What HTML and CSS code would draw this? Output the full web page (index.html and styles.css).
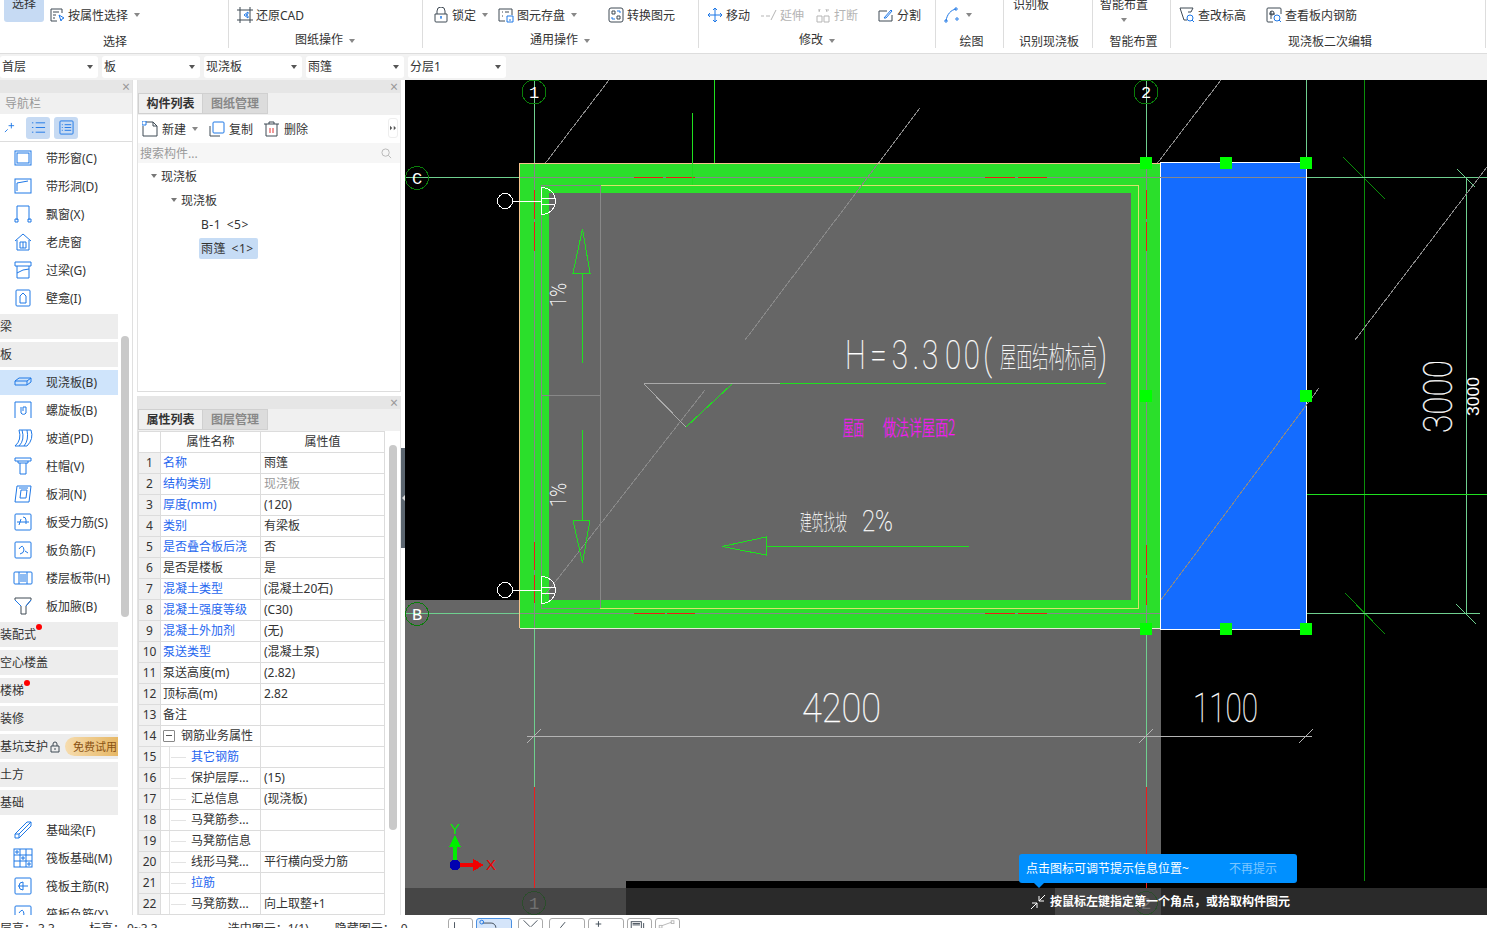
FILE: index.html
```html
<!DOCTYPE html>
<html lang="zh">
<head>
<meta charset="utf-8">
<title>现浇板</title>
<link rel="stylesheet" href="styles.css">
</head>
<body>
<div class="app">
  <header class="ribbon">
    <section class="group g1">
      <div class="tools">
        <div class="bigbtn">选择</div>
        <div class="tool"><svg class="ri" viewBox="0 0 16 16"><path class="dk" d="M13 6V2H2v12h6M4 5h6M4 8h3M4 11h2"/><path class="bl" d="M10 8l5 3-2 1-1 2z"/></svg>按属性选择<i class="caret"></i></div>
      </div>
      <div class="label low">选择</div>
    </section>
    <section class="group g2">
      <div class="tools">
        <div class="tool"><svg class="ri" viewBox="0 0 16 16"><path class="dk" d="M0 3h16M0 13h16M3 0v16M13 0v16"/><path class="bl" d="M11 5L7 8l4 3V9L9 8l2-1z"/></svg>还原CAD</div>
      </div>
      <div class="label">图纸操作<i class="caret"></i></div>
    </section>
    <section class="group g3">
      <div class="tools">
        <div class="tool t-lock"><svg class="ri" viewBox="0 0 16 16"><path class="dk" d="M4 7V4a4 4 0 0 1 8 0v3M2 7h12v7a1 1 0 0 1-1 1H3a1 1 0 0 1-1-1z"/><path class="bl" d="M8 9v3M7 10h2"/></svg>锁定<i class="caret"></i></div>
        <div class="tool t-save"><svg class="ri" viewBox="0 0 16 16"><path class="dk" d="M1 2h13v6M1 2v12h6M4 5h1M7 5h4M4 9h1"/><path class="bl" d="M9 9h6v6H9zM11 13h2"/></svg>图元存盘<i class="caret"></i></div>
        <div class="tool t-conv"><svg class="ri" viewBox="0 0 16 16"><rect class="dk" x="1" y="1" width="14" height="14" rx="2"/><path class="dk" d="M4 4h3v3H4zM9 9h3v3H9z"/><path class="bl" d="M9 4h3v2M7 12H4v-2"/></svg>转换图元</div>
      </div>
      <div class="label">通用操作<i class="caret"></i></div>
    </section>
    <section class="group g4">
      <div class="tools">
        <div class="tool t-move"><svg class="ri" viewBox="0 0 16 16"><path class="bl" d="M8 1v14M1 8h14M6 3l2-2 2 2M6 13l2 2 2-2M3 6L1 8l2 2M13 6l2 2-2 2"/></svg>移动</div>
        <div class="tool off t-ext"><svg class="ri" viewBox="0 0 16 16"><path class="gy" d="M0 9h3M5 9h4M10 13l5-10"/></svg>延伸</div>
        <div class="tool off t-brk"><svg class="ri" viewBox="0 0 16 16"><path class="gy" d="M2 9h5v6H2zM9 9h5v6H9zM4 5l1-3M12 5l-1-3M3 3h1M12 3h2"/></svg>打断</div>
        <div class="tool t-split"><svg class="ri" viewBox="0 0 16 16"><path class="dk" d="M14 8v6H1V4h8"/><path class="bl" d="M6 11l7-8 1 1-6 7z"/></svg>分割</div>
      </div>
      <div class="label">修改<i class="caret"></i></div>
    </section>
    <section class="group g5">
      <div class="tools">
        <div class="tool"><svg class="ri" viewBox="0 0 16 16"><path class="bl" d="M2 14C3 7 7 3 12 2"/><circle class="bl" cx="2" cy="14" r="1.2"/><circle class="bl" cx="12" cy="2" r="1.2"/><circle class="bl" cx="13" cy="12" r="1.2"/></svg><i class="caret c0"></i></div>
      </div>
      <div class="label low">绘图</div>
    </section>
    <section class="group g6">
      <div class="tools"><div class="cliptxt">识别板</div></div>
      <div class="label low">识别现浇板</div>
    </section>
    <section class="group g7">
      <div class="tools"><div class="cliptxt col">智能布置<i class="caret c0"></i></div></div>
      <div class="label low">智能布置</div>
    </section>
    <section class="group g8">
      <div class="tools">
        <div class="tool t-chk"><svg class="ri" viewBox="0 0 16 16"><path class="dk" d="M1 1h13l-2 4H9M1 1l4 12h3"/><circle class="bl" cx="11" cy="11" r="3"/><path class="bl" d="M13 13l2 2"/></svg>查改标高</div>
        <div class="tool t-view"><svg class="ri" viewBox="0 0 16 16"><path class="dk" d="M15 7V2a1 1 0 0 0-1-1H2a1 1 0 0 0-1 1v12a1 1 0 0 0 1 1h5M5 4v8M3 7h6"/><circle class="dk" cx="6" cy="6" r="2"/><circle class="bl" cx="11" cy="11" r="3"/><path class="bl" d="M13 13l2 2"/></svg>查看板内钢筋</div>
      </div>
      <div class="label low">现浇板二次编辑</div>
    </section>
  </header>

  <div class="filters">
    <div class="combo">首层</div>
    <div class="combo">板</div>
    <div class="combo">现浇板</div>
    <div class="combo">雨篷</div>
    <div class="combo">分层1</div>
  </div>

  <main class="main">
    <aside class="nav">
      <div class="phead"><span class="close">×</span></div>
      <div class="nav-title">导航栏</div>
      <div class="nav-tools">
        <svg class="pin" viewBox="0 0 12 12"><path class="bl" d="M8 1v6M5 4h6M1 11l3-3"/></svg>
        <span class="nt-btn"><svg viewBox="0 0 16 16"><path class="bl" d="M5 3h10M5 8h10M5 13h10M1 3h1.500M1 8h1.500M1 13h1.500"/></svg></span>
        <span class="nt-btn"><svg viewBox="0 0 16 16"><rect class="bl" x="1" y="1" width="14" height="14" rx="1"/><path class="bl" d="M3 5h1M6 5h7M3 8h1M6 8h7M3 11h1M6 11h7"/></svg></span>
      </div>
      <div class="nav-list">
        <div class="ni"><svg class="nic" viewBox="0 0 18 18"><rect class="bl" x="1" y="2" width="16" height="14"/><rect class="bl" x="3" y="4" width="12" height="10"/></svg>带形窗(C)</div>
        <div class="ni"><svg class="nic" viewBox="0 0 18 18"><rect class="bl" x="1" y="2" width="16" height="14"/><path class="bl" d="M3 14V6l11-2"/></svg>带形洞(D)</div>
        <div class="ni"><svg class="nic" viewBox="0 0 18 18"><path class="bl" d="M3 15V1h12v14M1 14h3v3H1zM14 14h3v3h-3z"/></svg>飘窗(X)</div>
        <div class="ni"><svg class="nic" viewBox="0 0 18 18"><path class="bl" d="M1 8l8-7 8 7M3 7v10h12V7M6 9h6v6H6zM9 9v6"/></svg>老虎窗</div>
        <div class="ni"><svg class="nic" viewBox="0 0 18 18"><path class="bl" d="M1 1h16v4H1zM3 5v12h12V5M3 12q6-4 12-4"/></svg>过梁(G)</div>
        <div class="ni"><svg class="nic" viewBox="0 0 18 18"><rect class="bl" x="2" y="1" width="14" height="16" rx="1"/><path class="bl" d="M6 14V7l3-3 3 3v7z"/></svg>壁龛(I)</div>
        <div class="ni sec">梁</div>
        <div class="ni sec">板</div>
        <div class="ni cur"><svg class="nic" viewBox="0 0 18 18"><path class="bl" d="M1 8h12l4-3H5zM1 8v4h12l4-3V5M13 8v4"/></svg>现浇板(B)</div>
        <div class="ni"><svg class="nic" viewBox="0 0 18 18"><path class="bl" d="M1 17V1h16v16M7 6v6a3 3 0 0 0 5 0V6H9v4"/></svg>螺旋板(B)</div>
        <div class="ni"><svg class="nic" viewBox="0 0 18 18"><path class="bl" d="M1 17q7-6 4-16h12q3 9-4 16zM5 17q6-6 3-16M10 17q5-6 3-16"/></svg>坡道(PD)</div>
        <div class="ni"><svg class="nic" viewBox="0 0 18 18"><path class="bl" d="M1 1h16v3H1zM4 4v2h10V4M6 6v11h6V6"/></svg>柱帽(V)</div>
        <div class="ni"><svg class="nic" viewBox="0 0 18 18"><path class="bl" d="M3 1h14l-2 16H1zM7 5h6l-1 8H6zM5 3h9"/></svg>板洞(N)</div>
        <div class="ni"><svg class="nic" viewBox="0 0 18 18"><rect class="bl" x="1" y="1" width="16" height="16" rx="1"/><path class="bl" d="M3 9h12M9 4a3 3 0 0 1 3 3v4M7 6l-2 6"/></svg>板受力筋(S)</div>
        <div class="ni"><svg class="nic" viewBox="0 0 18 18"><rect class="bl" x="1" y="1" width="16" height="16" rx="1"/><path class="bl" d="M5 8q4-6 5 1 0 3-4 4M11 10l3 2"/></svg>板负筋(F)</div>
        <div class="ni"><svg class="nic" viewBox="0 0 18 18"><rect class="bl" x="0" y="3" width="18" height="12" rx="1"/><path class="bl" d="M5 3v12M13 3v12M7 5v8M9 5v8M11 5v8"/></svg>楼层板带(H)</div>
        <div class="ni"><svg class="nic" viewBox="0 0 18 18"><path class="dk" d="M1 1h16v2L12 9v8H7V9L1 3z"/><path class="bl" d="M1 3l6 6M17 3l-5 6"/></svg>板加腋(B)</div>
        <div class="ni sec">装配式<b class="dot d1"></b></div>
        <div class="ni sec">空心楼盖</div>
        <div class="ni sec">楼梯<b class="dot d2"></b></div>
        <div class="ni sec">装修</div>
        <div class="ni sec">基坑支护<svg class="lk" viewBox="0 0 10 12"><path class="dk" d="M3 5V3a2 2 0 0 1 4 0v2M1 5h8v6H1zM5 7v2"/></svg><span class="pill">免费试用</span></div>
        <div class="ni sec">土方</div>
        <div class="ni sec">基础</div>
        <div class="ni"><svg class="nic" viewBox="0 0 18 18"><path class="bl" d="M1 13L13 1h4v4L5 17H1zM1 13h4v4M5 13L17 1M3 11l0 0"/></svg>基础梁(F)</div>
        <div class="ni"><svg class="nic" viewBox="0 0 18 18"><rect class="bl" x="0" y="0" width="18" height="18"/><path class="bl" d="M6 0v18M12 0v18M0 6h18M0 12h18M2 2h2v2H2zM8 8h2v2H8zM14 14h2v2h-2z"/></svg>筏板基础(M)</div>
        <div class="ni"><svg class="nic" viewBox="0 0 18 18"><rect class="bl" x="1" y="1" width="16" height="16" rx="1"/><path class="bl" d="M4 9h10M9 5a4 4 0 1 0 0 8M9 5v8"/></svg>筏板主筋(R)</div>
        <div class="ni"><svg class="nic" viewBox="0 0 18 18"><rect class="bl" x="1" y="1" width="16" height="16" rx="1"/><path class="bl" d="M5 8q4-6 5 1 0 3-4 4"/></svg>筏板负筋(X)</div>
      </div>
      <div class="thumb nav-thumb"></div>
    </aside>

    <div class="panels">
      <section class="panel comp">
        <div class="phead"><span class="close">×</span></div>
        <div class="tabs"><span class="tab on">构件列表</span><span class="tab">图纸管理</span></div>
        <div class="ptools">
          <span class="pt"><svg class="ri" viewBox="0 0 16 16"><path class="dk" d="M4 1h7l4 4v10H1V5"/><path class="dk" d="M11 1v4h4"/><path class="bl" d="M0 0h4v4H0z"/></svg>新建<i class="caret"></i></span>
          <span class="pt"><svg class="ri" viewBox="0 0 16 16"><path class="dk" d="M1 5v10h10"/><rect class="bl" x="4" y="1" width="11" height="11" rx="1"/></svg>复制</span>
          <span class="pt"><svg class="ri" viewBox="0 0 16 16"><path class="dk" d="M0 3h15M5 3V1h5v2M2 3v12h11V3"/><path class="rd" d="M6 7v5M9 7v5"/></svg>删除</span>
          <span class="more"><svg viewBox="0 0 10 8"><path class="tri" d="M1 1l3 3-3 3zM6 1l3 3-3 3z"/></svg></span>
        </div>
        <div class="search"><span>搜索构件...</span><svg viewBox="0 0 12 12"><circle class="gy" cx="5" cy="5" r="4"/><path class="gy" d="M8 8l3 3"/></svg></div>
        <div class="tree">
          <div class="tr l0"><i class="tw"></i>现浇板</div>
          <div class="tr l1"><i class="tw"></i>现浇板</div>
          <div class="tr l2">B-1 &lt;5&gt;</div>
          <div class="tr l2 sel"><span>雨篷 &lt;1&gt;</span></div>
        </div>
      </section>

      <section class="panel props">
        <div class="phead"><span class="close">×</span></div>
        <div class="tabs"><span class="tab on">属性列表</span><span class="tab">图层管理</span></div>
        <table class="ptable">
          <thead><tr><th class="idx0"></th><th class="cn">属性名称</th><th class="cv">属性值</th></tr></thead>
          <tbody>
            <tr><th>1</th><td class="lnk">名称</td><td>雨篷</td></tr>
            <tr><th>2</th><td class="lnk">结构类别</td><td class="mut">现浇板</td></tr>
            <tr><th>3</th><td class="lnk">厚度(mm)</td><td>(120)</td></tr>
            <tr><th>4</th><td class="lnk">类别</td><td>有梁板</td></tr>
            <tr><th>5</th><td class="lnk">是否叠合板后浇</td><td>否</td></tr>
            <tr><th>6</th><td>是否是楼板</td><td>是</td></tr>
            <tr><th>7</th><td class="lnk">混凝土类型</td><td>(混凝土20石)</td></tr>
            <tr><th>8</th><td class="lnk">混凝土强度等级</td><td>(C30)</td></tr>
            <tr><th>9</th><td class="lnk">混凝土外加剂</td><td>(无)</td></tr>
            <tr><th>10</th><td class="lnk">泵送类型</td><td>(混凝土泵)</td></tr>
            <tr><th>11</th><td>泵送高度(m)</td><td>(2.82)</td></tr>
            <tr><th>12</th><td>顶标高(m)</td><td>2.82</td></tr>
            <tr><th>13</th><td>备注</td><td></td></tr>
            <tr><th>14</th><td class="grp"><i class="minus"></i>钢筋业务属性</td><td></td></tr>
            <tr><th>15</th><td class="sub lnk">其它钢筋</td><td></td></tr>
            <tr><th>16</th><td class="sub">保护层厚...</td><td>(15)</td></tr>
            <tr><th>17</th><td class="sub">汇总信息</td><td>(现浇板)</td></tr>
            <tr><th>18</th><td class="sub">马凳筋参...</td><td></td></tr>
            <tr><th>19</th><td class="sub">马凳筋信息</td><td></td></tr>
            <tr><th>20</th><td class="sub">线形马凳...</td><td>平行横向受力筋</td></tr>
            <tr><th>21</th><td class="sub lnk">拉筋</td><td></td></tr>
            <tr><th>22</th><td class="sub">马凳筋数...</td><td>向上取整+1</td></tr>
          </tbody>
        </table>
        <div class="thumb tb-thumb"></div>
      </section>
      <div class="handle"><i></i></div>
    </div>

    <div class="canvas">
      <svg class="cad" viewBox="405 80 1082 835" width="1082" height="835">
        <rect class="f-gray" x="405" y="600" width="756" height="281"/>
        <rect class="f-gray" x="405" y="881" width="221" height="34"/>
        <rect class="f-gray" x="1055" y="888" width="106" height="27"/>

        <path class="l-dgreen" d="M1364 80V881M1343 157L1385 199M1345 593L1385 634"/>
        <path class="l-axis" d="M534.500 80V164M1146.500 80V164M405 177.500H520M1306 177.500H1487M405 613.500H520M1306 613.500H1480M1306.500 80V164M1466.500 178V614M1457 169L1475 187M1456 604L1476 624M534.500 628V787M1146.500 628V787"/>
        <path class="l-bright" d="M714.500 80V164M1125 494.500H1487M1125 472.500H1197"/>
        <path class="l-gray" d="M609 80L534 178M1221 80L1146 178M1487 167L1355 340"/>
        <path class="l-red" d="M534.500 787V888M1146.500 787V888"/>

        <rect class="f-green" x="519.500" y="163" width="641.500" height="465.500"/>
        <rect class="f-blue" x="1160.500" y="162.500" width="145.500" height="466.500"/>
        <rect class="f-gray" x="549" y="193" width="582" height="407"/>
        <path class="l-yellow" d="M600 185.500H1138.500V608.500H600"/>
        <path class="l-gray" d="M600 185.500H541.500V608.500H600M600.500 185V608M541 395.500H600M520 177.500H1306M520 613.500H1160M534.500 164V628M1146.500 164V628"/>
        <path class="l-gray" d="M920 108L745 340M705 390L545 595M1319 388L1161 600"/>
        <path class="l-orange" d="M519.500 628V163.500H1160"/>
        <path class="l-white" d="M520 628.500H1160"/>
        <path class="l-red" d="M534.500 190V219M534.500 222V251M534.500 542V570M534.500 575V603M1146.500 190V219M1146.500 222V251M1146.500 545V575M1146.500 578V605M634 177.500H663M666 177.500H695M985 177.500H1015M1018 177.500H1047M634 613.500H665M667 613.500H695M985 613.500H1015M1018 613.500H1047"/>
        <path class="l-bright" d="M692.500 113V185"/>

        <circle class="ring" cx="534" cy="92" r="12"/>
        <circle class="ring" cx="1146" cy="92" r="12"/>
        <circle class="ring" cx="417" cy="178" r="11.500"/>
        <circle class="ring" cx="417" cy="614" r="11.500"/>
        <text class="ax" x="534" y="98">1</text>
        <text class="ax" x="1146" y="98">2</text>
        <text class="ax" x="417" y="184">C</text>
        <text class="ax" x="417" y="620">B</text>

        <g class="door">
          <circle cx="505" cy="201" r="7.500"/><path d="M513 201.500H541M541.500 187.500A14 13.500 0 0 1 541.500 214.500ZM541.500 198.500H555M541.500 204.500H555"/>
          <circle cx="505" cy="590" r="7.500"/><path d="M513 590.500H541M541.500 576.500A14 13.500 0 0 1 541.500 603.500ZM541.500 587.500H555M541.500 593.500H555"/>
        </g>
        <path class="l-bright" d="M582.500 229L590 273H573ZM582.500 273V363M582.500 430V520M573 520H590L582.500 563ZM766 546.500H969M766 537V555L722 546.500ZM732 384L686 427M780 383.500H1106"/>
        <path class="l-gray2" d="M644 383.500H780M644 384L686 427"/>

        <text class="thin" transform="translate(845 369) scale(.72 1)" x="0 35 65 94 107 139 165 192">H=3.300(</text>
        <text class="thincjk" x="1000" y="368" textLength="97" lengthAdjust="spacingAndGlyphs">屋面结构标高</text>
        <text class="thin" transform="translate(1098 369) scale(.72 1)" x="0">)</text>
        <text class="mag" x="843" y="435" textLength="21" lengthAdjust="spacingAndGlyphs">屋面</text>
        <text class="mag" x="883" y="435" textLength="72" lengthAdjust="spacingAndGlyphs">做法详屋面2</text>
        <text class="thincjk t2" x="800" y="530" textLength="47" lengthAdjust="spacingAndGlyphs">建筑找坡</text>
        <text class="thin t3" x="862" y="531" textLength="31" lengthAdjust="spacingAndGlyphs">2%</text>
        <text class="thin t4" x="802" y="722" textLength="79" lengthAdjust="spacingAndGlyphs">4200</text>
        <text class="thin t4" x="1193" y="722" textLength="65" lengthAdjust="spacingAndGlyphs">1100</text>
        <text class="thin t4" transform="rotate(-90 1452 433)" x="1452" y="433" textLength="73" lengthAdjust="spacingAndGlyphs">3000</text>
        <text class="small" transform="rotate(-90 1479 416)" x="1479" y="416" textLength="39" lengthAdjust="spacingAndGlyphs">3000</text>
        <text class="thin t5" transform="rotate(-90 566 307)" x="566" y="307" textLength="24" lengthAdjust="spacingAndGlyphs">1%</text>
        <text class="thin t5" transform="rotate(-90 566 507)" x="566" y="507" textLength="24" lengthAdjust="spacingAndGlyphs">1%</text>

        <path class="l-dim" d="M527 736.500H1312M527 743L541 729M1139 743L1153 729M1299 743L1313 729"/>

        <g class="grips">
          <rect x="1140" y="157" width="12" height="12"/><rect x="1220" y="157" width="12" height="12"/><rect x="1300" y="157" width="12" height="12"/>
          <rect x="1140" y="390" width="12" height="12"/><rect x="1300" y="390" width="12" height="12"/>
          <rect x="1140" y="623" width="12" height="12"/><rect x="1220" y="623" width="12" height="12"/><rect x="1300" y="623" width="12" height="12"/>
        </g>

        <path class="arrow-g" d="M453 860V847H449L455 835L461 847H457V860Z"/>
        <path class="arrow-r" d="M458 863H473V859L484 865L473 871V867H458Z"/>
        <circle class="axis-o" cx="455" cy="865" r="5.500"/>
        <text class="ay" x="455" y="834">Y</text>
        <text class="ax-x" x="486" y="870">X</text>

        <circle class="ring" cx="534" cy="903" r="11.500"/>
        <circle class="ring" cx="1146" cy="903" r="11.500"/>
        <text class="ax" x="534" y="909">1</text>
        <text class="ax" x="1146" y="909">2</text>
      </svg>
      <div class="promptbar">
        <svg viewBox="0 0 16 16"><path class="wh" d="M1 15L7 9M2 9h5v5M15 1L9 7M9 2v5h5"/></svg>
        <span>按鼠标左键指定第一个角点，或拾取构件图元</span>
      </div>
      <div class="tip"><span>点击图标可调节提示信息位置~</span><span class="tip-off">不再提示</span></div>
    </div>
  </main>

  <footer class="status">
    <div class="st-text"><span class="s1">层高：</span><span class="s2">3.3</span><span class="s3">标高：</span><span class="s4">0~3.3</span><span class="s5">选中图元：</span><span class="s6">1(1)</span><span class="s7">隐藏图元：</span><span>0</span></div>
    <span class="sb w25"><svg viewBox="0 0 25 10"><path class="dk" d="M6 3V10"/></svg></span>
    <span class="sb w36 on"><svg viewBox="0 0 36 10"><path class="dk" d="M6 4H15a5 5 0 0 1 5 5"/><circle class="bl" cx="5" cy="3" r="2"/></svg></span>
    <span class="sb w25 m6"><svg viewBox="0 0 25 10"><path class="dk" d="M5 1L12 8M20 1L13 8"/></svg></span>
    <span class="sb w36 m6"><svg viewBox="0 0 36 10"><path class="dk" d="M11 9L16 3"/></svg></span>
    <span class="sb w36"><svg viewBox="0 0 36 10"><path class="dk" d="M7 5H13M10 2V8"/></svg></span>
    <span class="sb w25"><svg viewBox="0 0 25 10"><rect class="dk" x="3.500" y="2.500" width="11" height="8"/><path class="dk" d="M5 4.500H13M5 6H13M17 4V10"/></svg></span>
    <span class="sb w25"><svg viewBox="0 0 25 10"><path class="gy" d="M6 7L17 3"/><rect class="gy" x="3.500" y="6.500" width="3" height="3"/><rect class="gy" x="16.500" y="1.500" width="3" height="3"/></svg></span>
  </footer>
</div>
</body>
</html>
```
FILE: styles.css
```css
* { box-sizing: border-box; }
html, body { margin: 0; padding: 0; height: 100%; }
body {
  width: 1487px; height: 928px; overflow: hidden; background: #fff; color: #333;
  font: 12px/17px "Noto Sans", "Noto Sans CJK SC", sans-serif;
}
svg path, svg rect, svg circle { fill: none; }
.dk { stroke: #3f4a55; stroke-width: 1; fill: none; }
.bl { stroke: #1f78e6; stroke-width: 1; fill: none; }
.gy { stroke: #b5b5b5; stroke-width: 1; fill: none; }
.rd { stroke: #e03030; stroke-width: 1; fill: none; }
.wh { stroke: #fff; stroke-width: 1; fill: none; }

.app { display: flex; flex-direction: column; width: 1487px; height: 928px; overflow: hidden; }

/* ribbon */
.ribbon { display: flex; height: 54px; flex: none; background: #fff; border-bottom: 1px solid #ddd; overflow: hidden; }
.group { display: flex; flex-direction: column; flex: none; height: 48px; border-right: 1px solid #ddd; }
.g1 { width: 229px; } .g2 { width: 194px; } .g3 { width: 276px; } .g4 { width: 237px; }
.g5 { width: 68px; } .g6 { width: 89px; } .g7 { width: 78px; } .g8 { width: 315px; }
.tools { display: flex; height: 30px; flex: none; align-items: center; }
.g1 .tools { padding-left: 4px; align-items: flex-start; }
.g2 .tools { padding-left: 8px; }
.g3 .tools { padding-left: 10px; }
.g4 .tools { padding-left: 8px; }
.g5 .tools { padding-left: 8px; }
.g8 .tools { padding-left: 8px; }
.bigbtn { width: 40px; height: 27px; background: #c6daf3; border-radius: 0 0 3px 3px; text-align: center; line-height: 17px; margin-top: -5px; margin-right: 5px; }
.g1 .tool { height: 30px; }
.tool { display: flex; align-items: center; white-space: nowrap; }
.tool.off { color: #b4b4b4; }
.ri { width: 16px; height: 16px; flex: none; margin-right: 3px; }
.caret { display: inline-block; width: 0; height: 0; border: 3px solid transparent; border-top: 4px solid #888; border-bottom: 0; margin-left: 6px; vertical-align: middle; }
.c0 { margin-left: 3px; }
.t-lock { width: 65px; }
.t-save { width: 110px; }
.t-move { width: 54px; }
.t-ext { width: 54px; }
.t-brk { width: 63px; }
.t-chk { width: 87px; }
.label { height: 18px; flex: none; margin-top: 1px; line-height: 18px; text-align: center; white-space: nowrap; }
.label.low { margin-top: 3px; }
.label .caret { margin-left: 6px; border-width: 4px 3.500px 0; }
.g1 .label { padding-left: 2px; }
.g2 .label { padding-right: 1px; }
.g3 .label { padding-right: 1px; }
.g5 .label { padding-left: 4px; }
.g6 .label { padding-left: 2px; }
.g7 .label { padding-left: 4px; }
.g8 .label { padding-left: 4px; }
.cliptxt { align-self: flex-start; margin-top: -4px; padding-left: 9px; white-space: nowrap; }
.cliptxt.col { display: flex; flex-direction: column; align-items: center; width: 55px; padding-left: 7px; }
.cliptxt.col .caret { margin: 5px 0 0; }

/* filters */
.filters { display: flex; gap: 4px; height: 26px; flex: none; background: #f2f2f2; padding-top: 2px; }
.combo { position: relative; width: 98px; height: 22px; background: #fff; border-radius: 3px; line-height: 22px; padding-left: 2px; }
.combo::after { content: ""; position: absolute; right: 5px; top: 9px; border: 3px solid transparent; border-top: 4px solid #555; border-bottom: 0; }

/* main */
.main { display: flex; height: 835px; flex: none; overflow: hidden; }
.phead { position: relative; height: 13px; flex: none; background: #e6e6e6; }
.close { position: absolute; right: 2px; top: 0; font-size: 14px; line-height: 13px; color: #999; }

.nav { position: relative; width: 133px; flex: none; overflow: hidden; border-right: 1px solid #e0e0e0; display: flex; flex-direction: column; }
.nav-title { height: 21px; background: #f0f0f0; color: #999; line-height: 21px; padding-left: 5px; flex: none; }
.nav-tools { display: flex; align-items: center; height: 28px; flex: none; border-bottom: 1px solid #ddd; padding-left: 4px; }
.pin { width: 11px; height: 11px; margin-right: 11px; }
.nt-btn { display: flex; align-items: center; justify-content: center; width: 24px; height: 22px; background: #c6daf3; border-radius: 3px; margin-right: 4px; }
.nt-btn svg { width: 15px; height: 15px; }
.nav-list { display: flex; flex-direction: column; gap: 3px; width: 118px; padding-top: 4px; }
.ni { position: relative; display: flex; align-items: center; height: 25px; flex: none; padding-left: 46px; white-space: nowrap; }
.nic { position: absolute; left: 14px; top: 3px; width: 18px; height: 18px; overflow: visible; }
.ni.sec { background: #ededed; padding-left: 0; }
.ni.cur { background: #cfe4fb; }
.dot { position: absolute; width: 6px; height: 6px; border-radius: 50%; background: #f00; }
.d1 { left: 36px; top: 2px; }
.d2 { left: 24px; top: 2px; }
.lk { width: 10px; height: 12px; margin-left: 2px; flex: none; }
.pill { position: absolute; left: 65px; right: 0; top: 3px; height: 19px; line-height: 19px; font-size: 11px; border-radius: 10px 0 0 10px; background: linear-gradient(90deg, #f6dcae, #e7b866); color: #8a5213; padding-left: 8px; overflow: hidden; }
.thumb { position: absolute; width: 8px; background: #c9c9c9; border-radius: 4px; }
.nav-thumb { left: 121px; top: 256px; height: 281px; }

/* panels */
.panels { position: relative; width: 268px; flex: none; margin-left: 4px; display: flex; flex-direction: column; gap: 4px; padding-right: 4px; }
.panel { position: relative; display: flex; flex-direction: column; }
.comp { height: 312px; border-bottom: 1px solid #ddd; border-right: 1px solid #e3e3e3; border-left: 1px solid #e3e3e3; }
.props { height: 519px; border-right: 1px solid #e3e3e3; border-left: 1px solid #e3e3e3; overflow: hidden; }
.tabs { display: flex; height: 22px; flex: none; background: #f0f0f0; }
.tab { width: 65px; height: 21px; background: #dcdcdc; color: #888; font-weight: 700; text-align: center; line-height: 19px; border: 1px solid #d0d0d0; border-left: 0; }
.tab.on { background: #f0f0f0; color: #333; border-left: 1px solid #d0d0d0; }
.ptools { position: relative; display: flex; align-items: center; height: 28px; flex: none; padding-left: 4px; }
.pt { display: flex; align-items: center; margin-right: 11px; }
.pt .ri { margin-right: 4px; }
.pt:first-child .caret { margin-left: 6px; }
.more { position: absolute; right: 2px; top: 3px; width: 10px; height: 20px; background: #fff; border: 1px solid #eee; border-radius: 3px; display: flex; align-items: center; }
.more svg { width: 8px; height: 6px; }
svg .tri { fill: #555; }
.search { display: flex; align-items: center; justify-content: space-between; height: 20px; flex: none; background: #f6f6f6; color: #9a9a9a; padding: 0 8px 0 2px; }
.search svg { width: 11px; height: 11px; }
.tree { flex: 1; padding-top: 1px; }
.tr { display: flex; align-items: center; height: 24px; white-space: nowrap; }
.tw { width: 0; height: 0; border: 3px solid transparent; border-top: 4px solid #777; border-bottom: 0; margin-right: 4px; }
.l0 { padding-left: 13px; }
.l1 { padding-left: 33px; }
.l2 { padding-left: 63px; letter-spacing: .5px; word-spacing: 2px; }
.sel { padding-left: 61px; }
.sel span { display: block; width: 59px; height: 21px; line-height: 21px; background: #c6dcf5; border-radius: 2px; padding-left: 2px; }

.ptable { border-collapse: collapse; table-layout: fixed; width: 246px; }
.ptable th, .ptable td { height: 21px; padding: 0 3px; border: 1px solid #dcdcdc; font-weight: 400; white-space: nowrap; overflow: hidden; line-height: 20px; }
.ptable td:nth-child(2) { padding-left: 2px; }
.ptable thead th { background: #fff; text-align: center; }
.ptable tbody th { background: #f0f0f0; text-align: center; padding: 0; }
.idx0 { width: 22px; }
.cn { width: 100px; }
.cv { width: 124px; }
.lnk { color: #2767ef; }
.mut { color: #999; }
.ptable td.sub { position: relative; padding-left: 30px; }
.sub::before { content: ""; position: absolute; left: 8px; top: 0; bottom: 0; border-left: 1px solid #e3e3e3; }
.sub::after { content: ""; position: absolute; left: 10px; top: 10px; width: 15px; border-top: 1px solid #e3e3e3; }
.minus { display: inline-block; position: relative; width: 12px; height: 12px; border: 1px solid #888; border-radius: 1px; margin-right: 6px; vertical-align: -2px; }
.minus::after { content: ""; position: absolute; left: 2px; right: 2px; top: 4px; border-top: 1px solid #555; }
.tb-thumb { left: 251px; top: 49px; height: 385px; }
.handle { position: absolute; right: 0; top: 368px; width: 4px; height: 100px; background: #5c6670; display: flex; align-items: center; justify-content: center; }
.handle i { border: 3px solid transparent; border-right: 3px solid #ddd; border-left: 0; }

/* canvas */
.canvas { position: relative; width: 1082px; height: 835px; flex: none; background: #000; overflow: hidden; }
.cad { display: block; shape-rendering: crispEdges; }
.cad path { fill: none; stroke-width: 1; }
.cad .f-gray { fill: #666; }
.cad .f-green { fill: #2bdf2b; }
.cad .f-blue { fill: #146cff; stroke: #fff; stroke-width: 1; }
.cad .grips rect { fill: #00ff00; }
.l-axis { stroke: #6fcf8f; }
.l-dgreen { stroke: #0a8f0a; }
.l-bright { stroke: #1fe01f; }
.l-gray { stroke: #888; }
.l-gray2 { stroke: #aaa; }
.l-red { stroke: #ee1c1c; }
.l-yellow { stroke: #d9e26b; }
.l-orange { stroke: #f6c48e; }
.l-white { stroke: #e8e8d8; }
.l-dim { stroke: #b4b4b4; }
.cad .ring { stroke: #0a7d0a; fill: none; stroke-width: 1; }
.door circle, .door path { stroke: #fff; stroke-width: 1; fill: none; }
.ax { fill: #fff; font: 17px "Liberation Mono", monospace; text-anchor: middle; }
.thin { fill: #fff; stroke: #fff; stroke-width: .25; font: 100 41px Roboto, sans-serif; }
.thincjk { fill: #fff; stroke: #fff; stroke-width: .15; font: 100 29px "Noto Sans CJK SC", sans-serif; }
.t2 { font-size: 22px; }
.t3 { font-size: 30px; }
.t4 { font-size: 40px; }
.t5 { font-size: 22px; }
.mag { fill: #ff10ff; stroke: #ff10ff; stroke-width: .4; font: 100 21px "Noto Sans CJK SC", sans-serif; }
.small { fill: #fff; font: 16px "Liberation Sans", sans-serif; }
.cad .arrow-g { fill: #00ee00; }
.cad .arrow-r { fill: #f00000; }
.cad .axis-o { fill: #0000b0; }
.ay { fill: #00ee00; font: 15px "Liberation Sans", sans-serif; text-anchor: middle; }
.ax-x { fill: #f00000; font: 15px "Liberation Sans", sans-serif; }

.promptbar { position: absolute; left: 0; right: 0; bottom: 0; height: 27px; background: rgba(58, 58, 58, .72); display: flex; align-items: center; padding-left: 625px; color: #fff; font-weight: 700; }
.promptbar svg { width: 16px; height: 16px; margin-right: 4px; }
.tip { position: absolute; left: 614px; top: 774px; width: 278px; height: 29px; background: #0090ff; border-radius: 3px; color: #fff; line-height: 29px; padding-left: 7px; display: flex; }
.tip::after { content: ""; position: absolute; left: 15px; bottom: -5px; border: 5px solid transparent; border-top: 5px solid #0090ff; border-bottom: 0; }
.tip-off { margin-left: 40px; color: #7cc6ff; }

/* status */
.status { display: flex; height: 13px; flex: none; overflow: hidden; background: #fff; }
.st-text { width: 448px; flex: none; line-height: 28px; white-space: nowrap; }
.s1 { margin-right: 2px; } .s2 { margin-right: 34px; } .s3 { margin-right: 2px; } .s4 { margin-right: 70px; }
.s6 { margin-right: 26px; } .s7 { margin-right: 6px; }
.sb { display: block; height: 20px; margin-top: 3px; margin-right: 3px; border: 1px solid #aaa; border-radius: 3px; flex: none; background: #fff; }
.sb svg { display: block; width: 100%; height: 10px; }
.sb.on { background: #d5e5fa; border-color: #4a90e2; }
.w25 { width: 25px; } .w36 { width: 36px; } .m6 { margin-left: 3px; }
```
